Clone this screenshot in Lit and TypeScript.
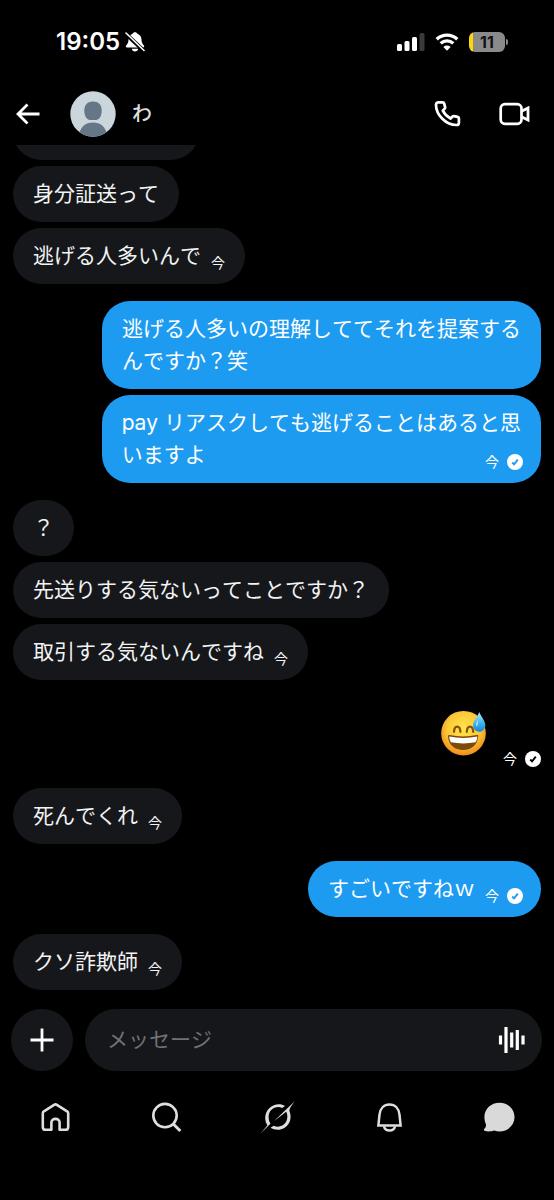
import { LitElement, html, css, svg, nothing } from "lit";
import { customElement, property } from "lit/decorators.js";

interface Message {
  text: string;
  time?: string;
  read?: boolean;
  emoji?: boolean;
}

interface Group {
  mine: boolean;
  messages: Message[];
}

const GROUPS: Group[] = [
  { mine: false, messages: [{ text: "身分証送って" }, { text: "逃げる人多いんで", time: "今" }] },
  {
    mine: true,
    messages: [
      { text: "逃げる人多いの理解しててそれを提案する\nんですか？笑" },
      { text: "pay リアスクしても逃げることはあると思\nいますよ", time: "今", read: true },
    ],
  },
  {
    mine: false,
    messages: [
      { text: "？" },
      { text: "先送りする気ないってことですか？" },
      { text: "取引する気ないんですね", time: "今" },
    ],
  },
  { mine: true, messages: [{ text: "😅", time: "今", read: true, emoji: true }] },
  { mine: false, messages: [{ text: "死んでくれ", time: "今" }] },
  { mine: true, messages: [{ text: "すごいですねｗ", time: "今", read: true }] },
  { mine: false, messages: [{ text: "クソ詐欺師", time: "今" }] },
];

const icon = (w: number, h: number, body: unknown) =>
  html`<svg width=${w} height=${h} viewBox="0 0 ${w} ${h}" fill="none" aria-hidden="true">${body}</svg>`;

const muted = icon(20, 20, svg`
  <path d="M10 .3c1.200 0 2.100.6 2.400 1.500 2.700.9 4 3 4.100 5.700.1 3.200.8 4.400 2.400 6 .6.7.3 1.900-.8 1.900H1.900c-1.100 0-1.400-1.200-.8-1.900 1.600-1.600 2.300-2.800 2.400-6 .1-2.700 1.400-4.800 4.100-5.700C7.900.9 8.800.3 10 .3z" fill="#fff"/>
  <path d="M6.800 16.700h6.400c-.3 1.700-1.600 2.800-3.200 2.800s-2.900-1.100-3.200-2.800z" fill="#fff"/>
  <path d="M.5 1.500l18.500 17.500" stroke="#000" stroke-width="4"/>
  <path d="M1 1l18 17.500" stroke="#fff" stroke-width="1.600" stroke-linecap="round"/>`);

const signal = icon(28, 18, svg`
  <rect x="0" y="11" width="5" height="7" rx="1.500" fill="#fff"/>
  <rect x="7.500" y="8" width="5" height="10" rx="1.500" fill="#fff"/>
  <rect x="15" y="4" width="5" height="14" rx="1.500" fill="#fff"/>
  <rect x="22.500" y="0" width="5" height="18" rx="1.500" fill="#3a3a3c"/>`);

const wifi = icon(24, 18, svg`
  <path d="M1.700 6.300a14.800 14.800 0 0 1 20.600 0" stroke="#fff" stroke-width="3.300"/>
  <path d="M5.700 10.400a9 9 0 0 1 12.600 0" stroke="#fff" stroke-width="3.200"/>
  <path d="M12 17.700l-3.600-3.700a5.200 5.200 0 0 1 7.200 0z" fill="#fff"/>`);

const back = icon(24, 22, svg`
  <path d="M23.500 11H2.500M11.500 1.500L2 11l9.500 9.500" stroke="#fff" stroke-width="2.800"/>`);

const phone = icon(28, 28, svg`
  <path d="M4.300 2.400h4.200c.9 0 1.500.5 1.700 1.300l.9 3.400c.1.600 0 1.100-.4 1.500l-1.900 2.100c1.700 3.400 4.200 6 7.800 7.800l2-2c.4-.4 1-.6 1.500-.4l3.500.8c.8.200 1.300.8 1.300 1.700v4.100c0 1.300-1 2.300-2.300 2.300C12 25 2 15 2 4.700c0-1.300 1-2.300 2.300-2.300z" stroke="#fff" stroke-width="2.700" stroke-linejoin="round"/>`);

const video = icon(32, 24, svg`
  <rect x="1.700" y="2.200" width="20.800" height="19.600" rx="4.200" stroke="#fff" stroke-width="2.700"/>
  <path d="M22.500 9.300l6.500-3.300v12l-6.500-3.300" stroke="#fff" stroke-width="2.800"/>`);

const person = icon(46, 46, svg`
  <clipPath id="disc"><circle cx="23" cy="23" r="22.700"/></clipPath>
  <g clip-path="url(#disc)">
    <rect width="46" height="46" fill="#cbd5dc"/>
    <path d="M23 10.500c5.200 0 8.700 3 8.700 9 0 6-2.700 9.500-5.700 9.500h-6c-3 0-5.700-3.500-5.700-9.500 0-6 3.500-9 8.700-9z" fill="#657787"/>
    <path d="M23 31.500c7.500 0 13 4 14.500 14.500h-29C10 35.500 15.500 31.500 23 31.500z" fill="#657787"/>
  </g>`);

const check = icon(16, 16, svg`
  <circle cx="8" cy="8" r="8" fill="#fff"/>
  <path class="tick" d="M5.200 8.500l1.900 1.900 3.700-4.700" stroke-width="1.900"/>`);

const plus = icon(24, 24, svg`<path d="M12 .5v23M.5 12h23" stroke="#fff" stroke-width="2.800"/>`);

const wave = icon(28, 28, svg`
  <path d="M2.500 9.500v9M8 1v26M13.700 6.500v15M19.300 4v20M25 9.500v9" stroke="#fff" stroke-width="3.200"/>`);

const sweat = html`<svg width="46" height="46" viewBox="0 0 46 46" role="img" aria-label="😅">
  <defs>
    <radialGradient id="face" cx=".5" cy=".4" r=".6">
      <stop offset="0" stop-color="#ffe54c"/><stop offset=".6" stop-color="#fdc936"/><stop offset="1" stop-color="#ee8c1c"/>
    </radialGradient>
    <linearGradient id="drop" x1="0" y1="0" x2="0" y2="1">
      <stop offset="0" stop-color="#b5e9fc"/><stop offset=".6" stop-color="#39b1f0"/><stop offset="1" stop-color="#1687d8"/>
    </linearGradient>
  </defs>
  <circle cx="22.500" cy="23.200" r="22.300" fill="url(#face)"/>
  <path d="M13 21.800c.4-7 6-7 6.400 0M25.800 21.800c.4-7 6-7 6.400 0" fill="none" stroke="#85510c" stroke-width="2.200" stroke-linecap="round"/>
  <path d="M7 26.200c0-1 .8-1.300 1.700-1.100 8.500 1.800 18.500 1.800 27 0 1-.2 1.700.2 1.600 1.200C36.500 34.800 31 40 22.200 40S7.500 34.800 7 26.200z" fill="#7b4a0c"/>
  <path d="M8.300 26.600c8.800 1.700 19.200 1.700 28 0 0 2.300-.6 4.200-1.800 5.700-7.700 1.500-16.800 1.500-24.500 0-1.100-1.500-1.700-3.400-1.700-5.700z" fill="#fff"/>
  <path d="M38.200 2c1.800 4.500 6.100 8.600 6.100 13.200 0 3.900-2.700 6.500-6.100 6.500-3.700 0-6.300-2.800-6.100-6.600.3-4.400 4.500-8.300 6.100-13.100z" fill="url(#drop)"/>
  <path d="M35 14.500c.2-1.800 1.200-3.200 2-4.500-.2 2 0 4-.5 5.500-.6 1-1.600.5-1.500-1z" fill="#fff" opacity=".6"/>
</svg>`;

const home = icon(34, 34, svg`
  <path d="M16.100 4.800L5.900 11.300c-.7.500-1.100 1.200-1.100 2v13.600c0 1.700 1.200 2.900 2.900 2.900h5.700v-7.200c0-5 8.200-5 8.200 0v7.200h5.700c1.700 0 2.900-1.200 2.900-2.900V13.300c0-.8-.4-1.500-1.100-2L18.900 4.800c-.9-.6-1.900-.6-2.800 0z" stroke="#dedede" stroke-width="2.600" stroke-linejoin="round"/>`);

const search = icon(34, 34, svg`
  <circle cx="16" cy="15.600" r="11.700" stroke="#dedede" stroke-width="2.600"/>
  <path d="M24.300 24l7 7" stroke="#dedede" stroke-width="3"/>`);

const grok = icon(36, 36, svg`
  <path d="M8.400 26.200C3.700 19.200 6.800 9.500 14.800 6.300c4-1.600 8-1.200 11.200.6l-2.900 2c-6.200-2.700-13.400 1.700-13.500 8.800 0 3 .8 5.200 1.800 7L2 34z" fill="#dedede"/>
  <path d="M14.800 22.300L35.500 2.500c-3 4.500-5.500 7-5 9.800 3.400 8.200-1.300 18.500-12 18.500-2.700 0-4.900-.7-7-2l3.200-2c5.500 2.500 12.400-.7 13.500-7.300.4-2.700 0-4.600-1-6.700z" fill="#dedede"/>`);

const bell = icon(34, 34, svg`
  <path d="M7.400 25.400L8.500 14.700C9.100 8.700 12.900 4.600 18.500 4.600s9.400 4.100 10 10.100l1.100 10.700z" stroke="#dedede" stroke-width="2.500"/>
  <path d="M13 26.500c.6 2.600 2.800 4 5.500 4s4.900-1.400 5.500-4" stroke="#dedede" stroke-width="2.500"/>`);

const chat = icon(34, 34, svg`
  <path d="M17.500 2.800c8.600 0 15 6.200 15 14.300S26 31.400 17.500 31.400c-1.900 0-3.600-.3-5.200-.9-2.800 1-7.300 1.300-9.800.2-.8-.4-.8-1.300-.1-1.900 1.500-1.400 2-3.300 1.300-5-.8-2-1.300-4.200-1.300-6.700 0-8.100 6.500-14.300 15.100-14.300z" fill="#d9d9d9"/>`);

@customElement("chat-bubble")
class ChatBubble extends LitElement {
  @property({ attribute: false }) message!: Message;
  @property({ type: Boolean, reflect: true }) mine = false;

  static styles = css`
    :host { display: block; max-width: 84%; --tick: #1d9bf0; }
    .bubble {
      padding: 12px 20px;
      border-radius: 28px;
      background: #16171a;
      color: #f1f3f4;
      font-size: 21px;
      line-height: 32px;
    }
    .mine { background: #1d9bf0; color: #fff; }
    .last { display: flex; align-items: flex-end; justify-content: space-between; gap: 10px; }
    .meta { display: flex; align-items: center; gap: 8px; font-size: 14px; line-height: 18px; }
    .mine .meta { margin-right: -2px; }
    .emoji { display: flex; align-items: flex-end; gap: 16px; padding: 13px 0 3px; color: #fff; --tick: #000; }
    .emoji .face { padding-bottom: 12px; }
    svg { display: block; }
    .tick { stroke: var(--tick); }
  `;

  render() {
    const { text, time, read, emoji } = this.message;
    const meta = time
      ? html`<span class="meta"><time>${time}</time>${read ? check : nothing}</span>`
      : nothing;
    if (emoji) return html`<div class="emoji"><span class="face">${sweat}</span>${meta}</div>`;
    const lines = text.split("\n");
    const last = lines.pop();
    return html`<div class="bubble ${this.mine ? "mine" : ""}">
      ${lines.map((line) => html`<div>${line}</div>`)}
      <div class="last"><span>${last}</span>${meta}</div>
    </div>`;
  }
}

@customElement("app-root")
class AppRoot extends LitElement {
  static styles = css`
    :host {
      display: flex;
      flex-direction: column;
      min-height: 100vh;
      background: #000;
      color: #fff;
      font-family: Inter, "Noto Sans CJK JP", sans-serif;
      font-kerning: none;
    }
    * { box-sizing: border-box; }
    svg { display: block; }
    button { display: grid; place-items: center; padding: 0; border: 0; background: none; color: inherit; font: inherit; }
    .status { display: flex; align-items: center; justify-content: space-between; height: 83px; padding: 0 46px 0 56px; }
    .clock, .system { display: flex; align-items: center; }
    .clock { gap: 5px; font-size: 24px; font-weight: 600; line-height: 28px; font-kerning: normal; }
    .system { gap: 10px; }
    .battery { display: flex; align-items: center; gap: 1px; }
    .cell {
      width: 36px;
      height: 20px;
      border-radius: 6px;
      background: linear-gradient(90deg, #fbd60a 4px, #8a8a8d 4px);
      color: #111;
      font-size: 16px;
      font-weight: 700;
      line-height: 20px;
      text-align: center;
    }
    .tip { width: 2px; height: 6px; border-radius: 0 2px 2px 0; background: #8a8a8d; }
    .bar { display: flex; align-items: center; height: 62px; padding: 0 23px 0 16px; }
    .peer { display: flex; flex: 1; align-items: center; gap: 16px; margin-left: 30px; }
    .name { margin: 0; color: #dcdedf; font-size: 20px; font-weight: 500; line-height: 28px; }
    .calls { display: flex; align-items: center; gap: 37px; }
    .thread { display: flex; flex: 1; flex-direction: column; gap: 17px; padding: 0 13px 19px; }
    .group { display: flex; flex-direction: column; align-items: flex-start; gap: 6px; }
    .group.mine { align-items: flex-end; }
    .cut { display: flex; align-items: flex-end; height: 15px; overflow: hidden; }
    .cut-shape { flex: none; width: 186px; height: 56px; border-radius: 28px; background: #16171a; }
    .composer { display: flex; gap: 12px; padding: 0 12px 0 11px; }
    .add { flex: none; width: 62px; height: 62px; border-radius: 31px; background: #16171a; }
    .field { display: flex; flex: 1; align-items: center; min-width: 0; height: 62px; padding: 0 16px 0 22px; border-radius: 31px; background: #16171a; }
    .field input { flex: 1; min-width: 0; padding: 0; border: 0; outline: 0; background: none; color: #fff; font: inherit; font-size: 21px; line-height: 32px; }
    .field input::placeholder { color: #6f7276; opacity: 1; }
    .tabs { display: grid; grid-template-columns: repeat(5, 1fr); height: 129px; padding-top: 28px; }
    .tabs a { display: flex; justify-content: center; align-items: center; height: 36px; }
  `;

  private group(g: Group, first: boolean) {
    return html`<section class="group ${g.mine ? "mine" : ""}">
      ${first ? html`<div class="cut" aria-hidden="true"><div class="cut-shape"></div></div>` : nothing}
      ${g.messages.map((m) => html`<chat-bubble .message=${m} ?mine=${g.mine}></chat-bubble>`)}
    </section>`;
  }

  render() {
    return html`
      <div class="status">
        <div class="clock"><time>19:05</time>${muted}</div>
        <div class="system">
          ${signal}${wifi}
          <div class="battery"><div class="cell">11</div><div class="tip"></div></div>
        </div>
      </div>
      <header class="bar">
        <button aria-label="戻る">${back}</button>
        <div class="peer">${person}<h1 class="name">わ</h1></div>
        <div class="calls">
          <button aria-label="音声通話">${phone}</button>
          <button aria-label="ビデオ通話">${video}</button>
        </div>
      </header>
      <main class="thread">${GROUPS.map((g, i) => this.group(g, i === 0))}</main>
      <form class="composer" @submit=${(e: Event) => e.preventDefault()}>
        <button class="add" type="button" aria-label="追加">${plus}</button>
        <div class="field">
          <input id="message" type="text" aria-label="メッセージ" placeholder="メッセージ" />
          <button type="button" aria-label="ボイスメッセージ">${wave}</button>
        </div>
      </form>
      <nav class="tabs">
        <a href="#home" aria-label="ホーム">${home}</a>
        <a href="#search" aria-label="検索">${search}</a>
        <a href="#grok" aria-label="Grok">${grok}</a>
        <a href="#notifications" aria-label="通知">${bell}</a>
        <a href="#messages" aria-label="メッセージ" aria-current="page">${chat}</a>
      </nav>
    `;
  }
}
